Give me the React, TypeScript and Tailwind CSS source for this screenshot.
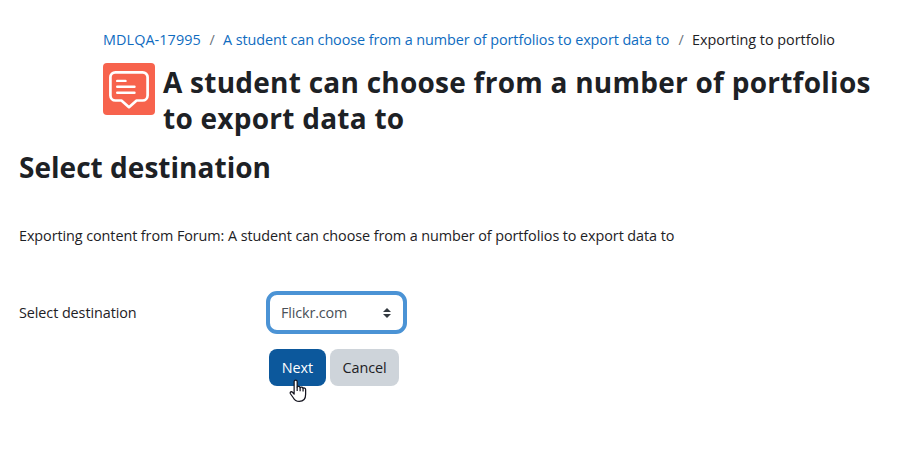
function ForumIcon() {
  return (
    <div className="size-[52px] shrink-0 rounded-[4px] bg-[#f7634d]">
      <svg viewBox="0 0 52 52" className="size-full" fill="none" stroke="#fff" strokeLinecap="round" strokeLinejoin="round">
        <path
          strokeWidth="2.7"
          d="M12.400 9.300h27.200a5 5 0 0 1 5 5v18.200a5 5 0 0 1-5 5h-6L26 44.200l-7.600-6.700h-6a5 5 0 0 1-5-5V14.300a5 5 0 0 1 5-5Z"
        />
        <path strokeWidth="2.4" d="M14.200 17.900h8.300M14.200 23.800h17.300M14.200 29.700h17.300" />
      </svg>
    </div>
  );
}

function HandCursor() {
  return (
    <svg viewBox="0 0 20 25" className="absolute left-[20px] top-[30px] h-[24px] w-[19px]" fill="#fff" stroke="#14141f" strokeWidth="1.3" strokeLinejoin="round">
      <path d="M5.4 15.8V2.6a1.6 1.6 0 0 1 3.2 0v5.6c.5-1 2.9-.8 3.1.7.6-1 2.9-.7 3.1.8.8-.8 2.7-.4 2.7 1.3v5c0 4.7-2.7 7.5-6.7 7.500-3.500 0-5.100-1.500-6.300-3.900l-3-4.200c-1.100-1.800 1.300-2.900 2.400-1.300Z" />
      <path fill="none" d="M8.600 8v4.500M11.700 8.900v3.800M14.800 9.700v3.200" />
    </svg>
  );
}

export default function App() {
  return (
    <main className="h-[452px] overflow-hidden bg-white px-[19px] pt-[30px] font-['Open_Sans','Noto_Sans',sans-serif] text-[14.4px] leading-5 tracking-[-0.08px] text-[#1d2125]">
      {/* Breadcrumb */}
      <nav className="flex whitespace-nowrap pl-[84px]">
        <a href="#" className="w-[98px] tracking-[0.08px] text-[#0f6cbf]">MDLQA-17995</a>
        <span className="w-[22px] text-center text-[#6a737b]">/</span>
        <a href="#" className="w-[447px] text-[#0f6cbf]">A student can choose from a number of portfolios to export data to</a>
        <span className="w-[22px] text-center text-[#6a737b]">/</span>
        <span className="tracking-[-0.02px]">Exporting to portfolio</span>
      </nav>

      {/* Activity header */}
      <header className="mt-[13px] flex gap-2 pl-[84px]">
        <ForumIcon />
        <h1 className="mt-[1px] whitespace-nowrap text-[28px] font-bold leading-9 tracking-[0.25px]">
          A student can choose from a number of portfolios
          <br />
          to export data to
        </h1>
      </header>

      <h2 className="mt-[13px] text-[28px] font-bold leading-9 tracking-[0.03px]">Select destination</h2>
      <p className="mt-[41px]">Exporting content from Forum: A student can choose from a number of portfolios to export data to</p>

      {/* Destination form */}
      <form className="mt-[45px]">
        <div className="flex items-center">
          <label htmlFor="destination" className="w-[247px]">Select destination</label>
          <button
            id="destination"
            type="button"
            className="flex h-[43px] w-[141px] items-center justify-between rounded-[11px] border-4 border-[#4b93d5] bg-white pl-[11px] pr-[12px] text-[#495057]"
          >
            <span className="tracking-[-0.15px]">Flickr.com</span>
            <svg viewBox="0 0 8 10" className="h-[10px] w-[8px]" fill="#343a40">
              <path d="M4 0 8 4H0ZM4 10 0 6h8Z" />
            </svg>
          </button>
        </div>
        <div className="relative ml-[250px] mt-[15px] flex w-[130px] gap-1">
          <button type="button" className="h-[37px] w-[57px] rounded-lg bg-[#0c589c] text-white">Next</button>
          <button type="button" className="h-[37px] w-[69px] rounded-lg bg-[#ced4da]">Cancel</button>
          <HandCursor />
        </div>
      </form>
    </main>
  );
}
